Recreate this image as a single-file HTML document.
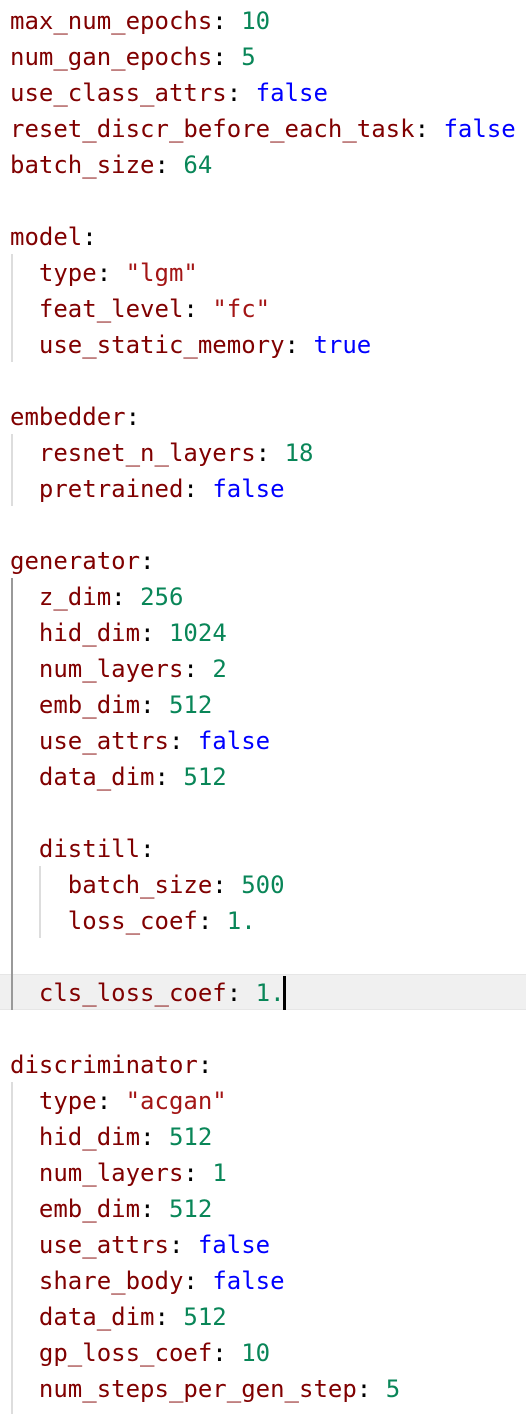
<!DOCTYPE html><html><head><style>
body{margin:0;background:#fff;width:526px;height:1414px;overflow:hidden;position:relative}
pre{margin:0;position:absolute;left:10px;top:3px;font:24px/36px "DejaVu Sans Mono","Liberation Mono",monospace;color:#000}
.k{color:#800000}.n{color:#098658}.b{color:#0000ff}.s{color:#a31515}
.g{position:absolute;width:2px;background:#ddd}
.hl{position:absolute;left:0;width:526px;top:974px;height:36px;background:#f0f0f0;border-top:1px solid #e6e6e6;border-bottom:1px solid #e6e6e6;box-sizing:border-box}
.cur{position:absolute;left:283px;top:976px;width:3px;height:34px;background:#000}
</style></head><body>
<div class="hl"></div>
<div class="g" style="left:11px;top:254px;height:108px"></div>
<div class="g" style="left:11px;top:434px;height:72px"></div>
<div class="g" style="left:11px;top:578px;height:432px;background:#999"></div>
<div class="g" style="left:39px;top:866px;height:72px"></div>
<div class="g" style="left:11px;top:1082px;height:332px"></div>
<pre><span class="k">max_num_epochs</span>: <span class="n">10</span>
<span class="k">num_gan_epochs</span>: <span class="n">5</span>
<span class="k">use_class_attrs</span>: <span class="b">false</span>
<span class="k">reset_discr_before_each_task</span>: <span class="b">false</span>
<span class="k">batch_size</span>: <span class="n">64</span>

<span class="k">model</span>:
  <span class="k">type</span>: <span class="s">"lgm"</span>
  <span class="k">feat_level</span>: <span class="s">"fc"</span>
  <span class="k">use_static_memory</span>: <span class="b">true</span>

<span class="k">embedder</span>:
  <span class="k">resnet_n_layers</span>: <span class="n">18</span>
  <span class="k">pretrained</span>: <span class="b">false</span>

<span class="k">generator</span>:
  <span class="k">z_dim</span>: <span class="n">256</span>
  <span class="k">hid_dim</span>: <span class="n">1024</span>
  <span class="k">num_layers</span>: <span class="n">2</span>
  <span class="k">emb_dim</span>: <span class="n">512</span>
  <span class="k">use_attrs</span>: <span class="b">false</span>
  <span class="k">data_dim</span>: <span class="n">512</span>

  <span class="k">distill</span>:
    <span class="k">batch_size</span>: <span class="n">500</span>
    <span class="k">loss_coef</span>: <span class="n">1.</span>

  <span class="k">cls_loss_coef</span>: <span class="n">1.</span>

<span class="k">discriminator</span>:
  <span class="k">type</span>: <span class="s">"acgan"</span>
  <span class="k">hid_dim</span>: <span class="n">512</span>
  <span class="k">num_layers</span>: <span class="n">1</span>
  <span class="k">emb_dim</span>: <span class="n">512</span>
  <span class="k">use_attrs</span>: <span class="b">false</span>
  <span class="k">share_body</span>: <span class="b">false</span>
  <span class="k">data_dim</span>: <span class="n">512</span>
  <span class="k">gp_loss_coef</span>: <span class="n">10</span>
  <span class="k">num_steps_per_gen_step</span>: <span class="n">5</span></pre>
<div class="cur"></div>
</body></html>
